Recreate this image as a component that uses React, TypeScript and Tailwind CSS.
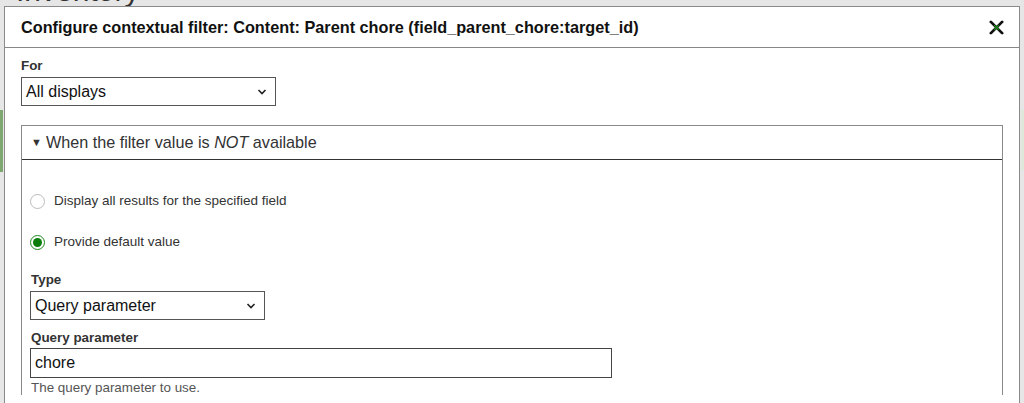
import React from 'react';

const Chevron: React.FC = () => (
  <svg width="10" height="6" viewBox="0 0 10 6" className="shrink-0">
    <path d="M1.5 1 L5 4.5 L8.5 1" fill="none" stroke="#222" strokeWidth="1.6" />
  </svg>
);

const SelectBox: React.FC<{ value: string; width: string }> = ({ value, width }) => (
  <div className={`${width} h-[29px] border border-[#555] bg-white flex items-center justify-between pl-[4px] pr-[8px]`}>
    <span className="text-[16px] text-[#111]">{value}</span>
    <Chevron />
  </div>
);

const Radio: React.FC<{ checked?: boolean; label: string }> = ({ checked, label }) => (
  <div className="h-[20px] flex items-center gap-[9px]">
    {checked ? (
      <div className="w-[15px] h-[15px] rounded-full border-[1.5px] border-[#1f8a1f] flex items-center justify-center">
        <div className="w-[9px] h-[9px] rounded-full bg-[#0a7d0a]" />
      </div>
    ) : (
      <div className="w-[15px] h-[15px] rounded-full border border-[#bbb] bg-white" />
    )}
    <span className="text-[13.5px] text-[#333]">{label}</span>
  </div>
);

const App: React.FC = () => {
  return (
    <div className="w-[1024px] h-[403px] overflow-hidden bg-[#e6e6e6] flex flex-col font-['Liberation_Sans',Arial,sans-serif]">
      {/* page behind the dialog, only its descenders peek out */}
      <div className="h-[6px] overflow-hidden flex items-start justify-between pl-[16px] pr-[40px] text-[#333]">
        <span className="text-[30px] leading-none mt-[-24px]">Inventory</span>
        <span className="text-[15px] leading-none mt-[-16px]">Display any settings</span>
      </div>

      <div className="flex flex-1 min-h-0">
        <div className="w-[4px] pt-[104px]">
          <div className="w-[3px] h-[62px] bg-[#7fa870]" />
        </div>

        <div className="flex-1 bg-white border border-b-0 border-[#8a8a8a] flex flex-col">
          <div className="h-[41px] shrink-0 border-b border-[#888] flex items-center justify-between pl-[16px] pr-[15px]">
            <span className="text-[16.25px] font-bold text-[#111]">
              Configure contextual filter: Content: Parent chore (field_parent_chore:target_id)
            </span>
            <svg width="15" height="15" viewBox="0 0 16 16">
              <path d="M2 2 L14 14 M14 2 L2 14" stroke="#111" strokeWidth="3" strokeLinecap="round" />
              <path d="M5.5 5.5 L10.5 10.5 M10.5 5.5 L5.5 10.5" stroke="#1e9a1e" strokeWidth="1.3" />
            </svg>
          </div>

          <div className="px-[16px] pt-[10px] flex flex-col">
            <span className="text-[13.4px] leading-[16px] font-bold text-[#333]">For</span>
            <div className="mt-[3px]">
              <SelectBox value="All displays" width="w-[255px]" />
            </div>

            <div className="mt-[19px] border border-[#8a8a8a] border-b-0 flex flex-col">
              <div className="h-[34px] border-b border-[#333] flex items-center pl-[9px] gap-[4px] text-[16.2px] text-[#333]">
                <span className="text-[11px]">▼</span>
                <span>
                  When the filter value is <em>NOT</em> available
                </span>
              </div>

              <div className="pl-[8px] pt-[31px] flex flex-col">
                <Radio label="Display all results for the specified field" />
                <div className="mt-[21px]">
                  <Radio checked label="Provide default value" />
                </div>

                <span className="mt-[20px] pl-[1px] text-[13.4px] leading-[16px] font-bold text-[#333]">Type</span>
                <div className="mt-[3px]">
                  <SelectBox value="Query parameter" width="w-[235px]" />
                </div>

                <span className="mt-[10px] pl-[1px] text-[13.4px] leading-[16px] font-bold text-[#333]">Query parameter</span>
                <div className="mt-[2px] w-[582px] h-[30px] border border-[#444] bg-white flex items-center pl-[4px]">
                  <span className="text-[16px] text-[#111]">chore</span>
                </div>
                <span className="mt-[3px] pl-[1px] text-[13.4px] leading-[14px] text-[#555]">The query parameter to use.</span>
              </div>
            </div>
          </div>
        </div>

        <div className="w-[4px] pt-[104px] pl-[1px]">
          <div className="w-[3px] h-[60px] bg-[#dfe8da]" />
        </div>
      </div>
    </div>
  );
};

export default App;
